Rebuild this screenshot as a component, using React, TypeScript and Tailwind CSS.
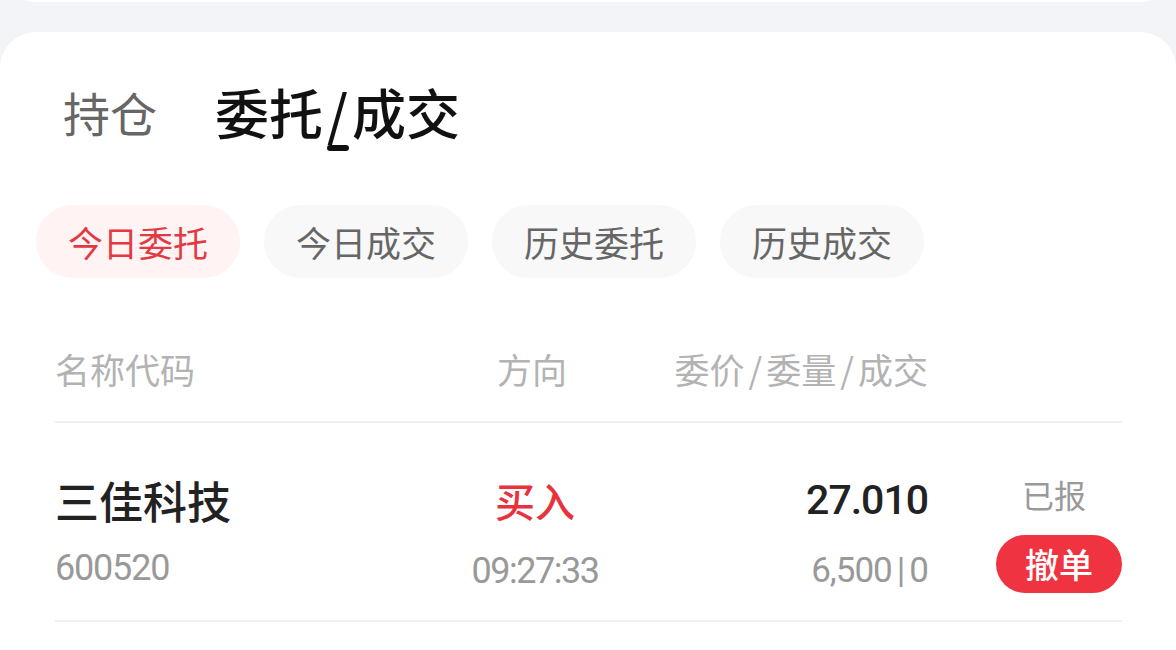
import React, { useState } from 'react';

const cjk = { fontFamily: '"Noto Sans CJK SC", "Noto Sans", sans-serif' };
const num = { fontFamily: 'Roboto, "Noto Sans CJK SC", sans-serif' };

const chips = ['今日委托', '今日成交', '历史委托', '历史成交'];

export default function App() {
  const [activeChip, setActiveChip] = useState(0);

  return (
    <div className="w-[1176px] h-[650px] overflow-hidden bg-[#f3f4f8]" style={cjk}>
      {/* tail of the card above */}
      <div className="-mt-[38px] h-[40px] bg-white rounded-b-[36px]" />

      {/* main card */}
      <div className="mt-[30px] h-[700px] bg-white rounded-t-[36px] pt-[50px]">
        {/* top tabs */}
        <div className="flex items-start pl-[63px] gap-[58px]">
          <div className="h-[60px] leading-[60px] text-[47px] text-[#666666]">持仓</div>
          <div className="flex flex-col items-center">
            <div className="h-[60px] leading-[60px] text-[54px] font-medium text-[#111111]">
              委托<span className="mx-[4px]">/</span>成交
            </div>
            <div className="mt-[3px] w-[22px] h-[6px] rounded-full bg-[#111111]" />
          </div>
        </div>

        {/* filter chips */}
        <div className="mt-[54px] flex px-[36px] gap-[24px]">
          {chips.map((c, i) => (
            <button
              key={c}
              onClick={() => setActiveChip(i)}
              className={`w-[204px] h-[73px] rounded-full text-[35px] leading-[73px] ${
                i === activeChip ? 'bg-[#fff3f3] text-[#e23a44]' : 'bg-[#f8f8f8] text-[#666666]'
              }`}
            >
              {c}
            </button>
          ))}
        </div>

        {/* table */}
        <div className="pl-[55px] pr-[54px]">
          {/* header */}
          <div className="mt-[73px] flex items-center text-[35px] leading-[36px] text-[#b3b3b3] pb-[34px] border-b-2 border-[#f0f0f0]">
            <div className="w-[380px]">名称代码</div>
            <div className="w-[200px] text-center pr-[6px]">方向</div>
            <div className="flex-1 text-right">
              委价<span className="mx-[4px]">/</span>委量<span className="mx-[4px]">/</span>成交
            </div>
            <div className="w-[194px]" />
          </div>

          {/* row */}
          <div className="flex items-start h-[199px] pt-[55px] border-b-2 border-[#f0f0f0]">
            <div className="w-[380px] flex flex-col">
              <div className="text-[44px] leading-[44px] font-medium text-[#222222]">三佳科技</div>
              <div className="mt-[28px] text-[36px] leading-[36px] text-[#999999] tracking-[-1.2px]" style={num}>600520</div>
            </div>
            <div className="w-[200px] flex flex-col items-center">
              <div className="text-[40px] leading-[44px] font-medium text-[#e8323c]">买入</div>
              <div className="mt-[31px] text-[36px] leading-[36px] text-[#999999] tracking-[-1.5px]" style={num}>09:27:33</div>
            </div>
            <div className="flex-1 flex flex-col items-end">
              <div className="text-[41px] leading-[44px] font-medium text-[#222222] tracking-[-1px]" style={num}>27.010</div>
              <div className="mt-[31px] text-[35px] leading-[36px] text-[#999999] tracking-[-1px]" style={num}>
                6,500<span className="mx-[5px]">|</span>0
              </div>
            </div>
            <div className="ml-[68px] w-[126px] flex flex-col items-center">
              <div className="text-[32px] leading-[32px] text-[#999999] pr-[10px]">已报</div>
              <button className="mt-[25px] w-[126px] h-[58px] rounded-full bg-[#ef3340] text-white font-medium text-[34px] leading-[58px]">
                撤单
              </button>
            </div>
          </div>
        </div>
      </div>
    </div>
  );
}
